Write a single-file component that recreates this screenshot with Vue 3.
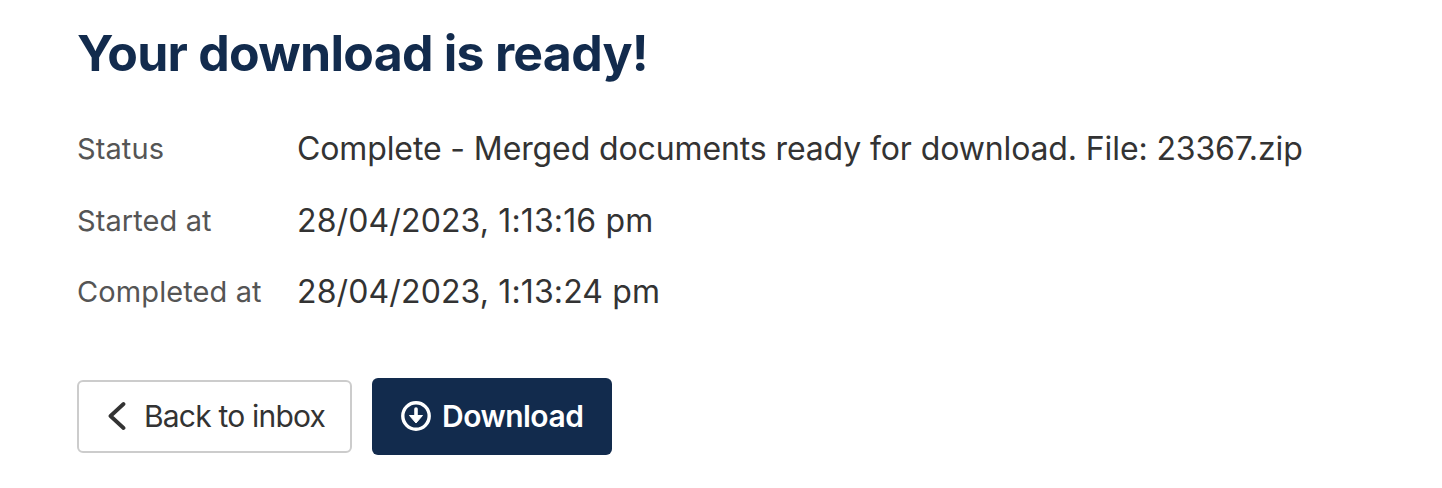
<script setup>
const rows = [
  { label: 'Status', value: 'Complete - Merged documents ready for download. File: 23367.zip' },
  { label: 'Started at', value: '28/04/2023, 1:13:16 pm' },
  { label: 'Completed at', value: '28/04/2023, 1:13:24 pm' }
]
</script>

<template>
  <main class="page">
    <h1 class="title">Your download is ready!</h1>
    <dl class="details">
      <div v-for="row in rows" :key="row.label" class="row">
        <dt class="label">{{ row.label }}</dt>
        <dd class="value">{{ row.value }}</dd>
      </div>
    </dl>
    <div class="actions">
      <button class="btn back" type="button">
        <svg class="chev" viewBox="0 0 20 30" width="20" height="30" fill="none" stroke="#333" stroke-width="3.8" stroke-linecap="round" stroke-linejoin="round"><path d="M17.5 3 L4.5 15 L17.5 27"/></svg>
        <span>Back to inbox</span>
      </button>
      <button class="btn download" type="button">
        <svg class="dl" viewBox="0 0 30 30" width="30" height="30" fill="none"><circle cx="15" cy="15" r="13.2" stroke="#fff" stroke-width="3.4"/><path d="M15 8 V16" stroke="#fff" stroke-width="3.6" stroke-linecap="round"/><path d="M8.5 14.5 H21.5 L15 22 Z" fill="#fff" stroke="#fff" stroke-width="1" stroke-linejoin="round"/></svg>
        <span>Download</span>
      </button>
    </div>
  </main>
</template>

<style scoped>
.page { padding: 23px 77px 0; font-family: Inter, "Noto Sans", sans-serif; }
.title { margin: 0; font-size: 50px; line-height: 60px; font-weight: 700; color: #122b4d; letter-spacing: -0.75px; }
.details { margin: 30px 0 0; display: flex; flex-direction: column; }
.row { display: flex; align-items: center; height: 71.5px; }
.label { width: 220px; font-size: 29px; letter-spacing: 0.1px; color: #555; }
.value { margin: 0; font-size: 32px; letter-spacing: 0.13px; color: #333; }
.row:first-child .value { letter-spacing: -0.115px; }
.actions { display: flex; align-items: center; gap: 20px; margin-top: 50.5px; }
.btn { display: inline-flex; align-items: center; font-family: inherit; border-radius: 6px; white-space: nowrap; padding-bottom: 2px; }
.back { width: 275px; height: 73px; background: #fff; border: 2px solid #ccc; gap: 18px; padding-left: 27px; padding-right: 0; padding-top: 0; font-size: 30px; letter-spacing: -0.8px; color: #333; }
.download { width: 240px; height: 77px; background: #122b4d; border: 0; gap: 11px; padding-left: 29px; padding-right: 0; padding-top: 0; font-size: 30px; font-weight: 600; letter-spacing: -0.5px; color: #fff; }
</style>
